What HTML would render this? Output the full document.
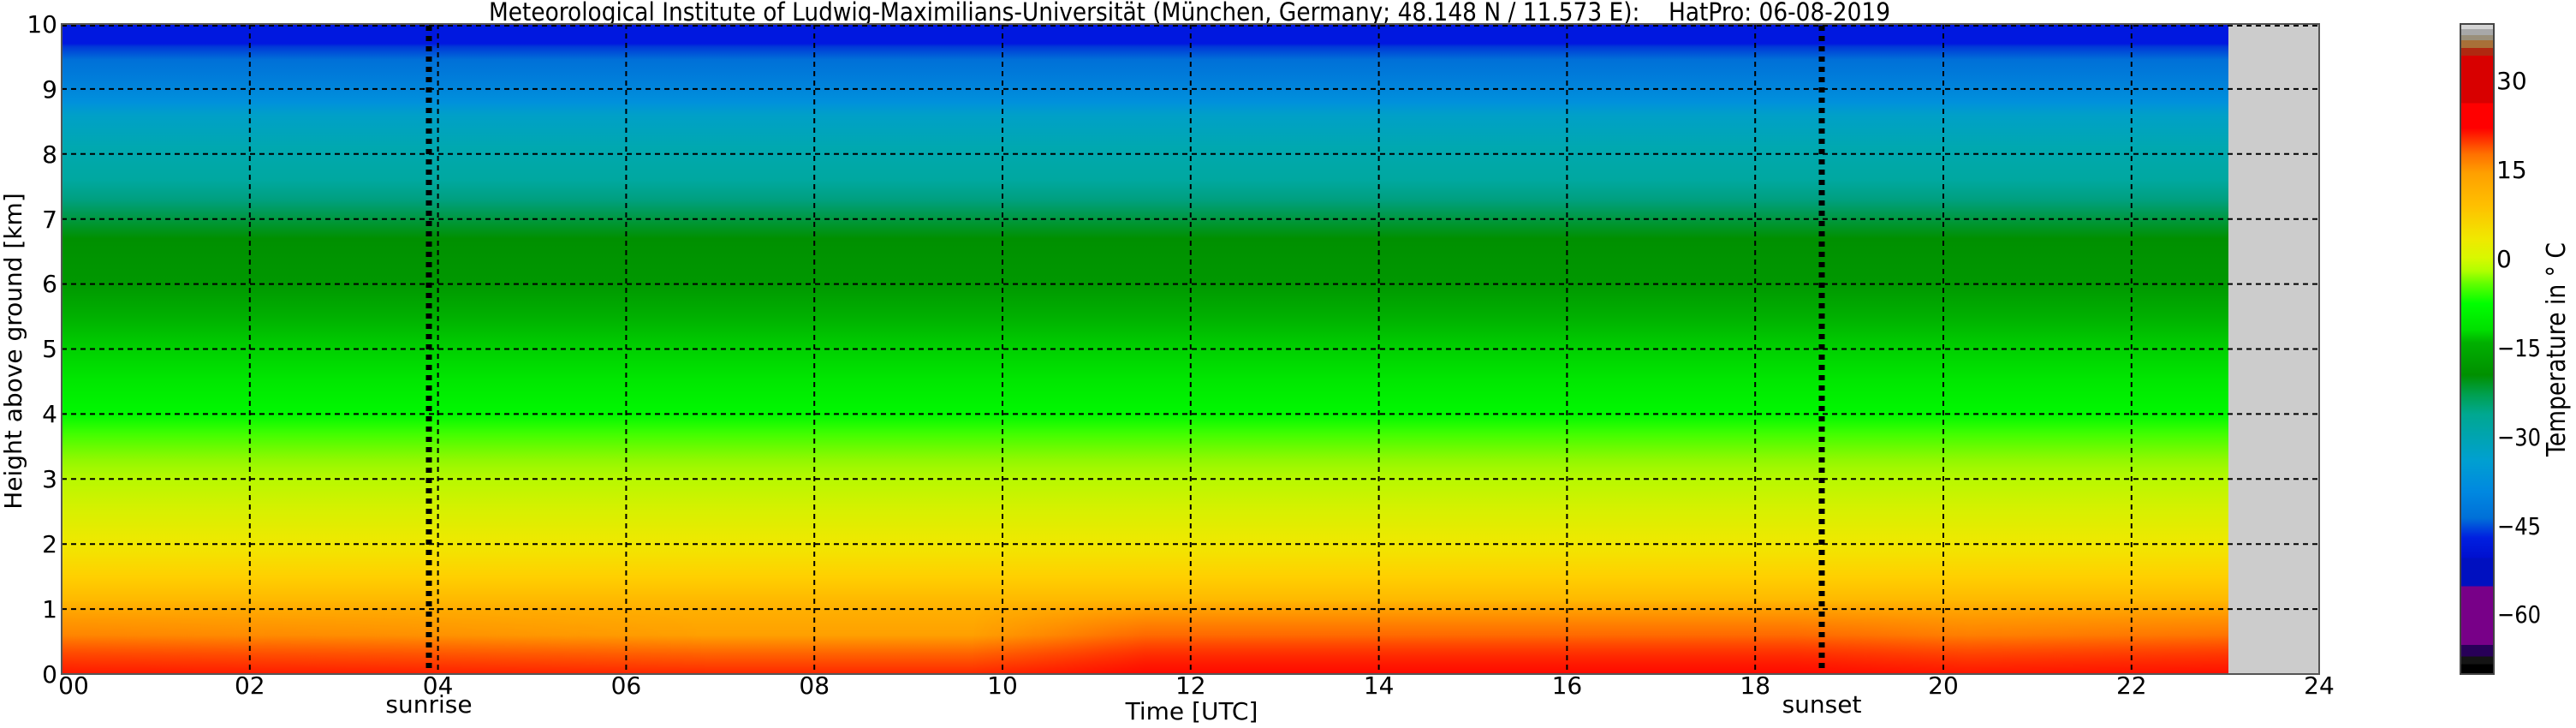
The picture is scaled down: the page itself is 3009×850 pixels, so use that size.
<!DOCTYPE html>
<html><head><meta charset="utf-8"><style>html,body{margin:0;padding:0;background:#fff}svg{display:block}</style></head>
<body>
<svg width="3009" height="850" xmlns="http://www.w3.org/2000/svg" font-family="DejaVu Sans, Liberation Sans, sans-serif">
<defs>
<linearGradient id="plot" x1="0" y1="0" x2="0" y2="1">
<stop offset="0" stop-color="#0018e0"/><stop offset="0.03" stop-color="#0018e0"/>
<stop offset="0.035" stop-color="#0038d8"/><stop offset="0.055" stop-color="#0070d8"/>
<stop offset="0.09" stop-color="#0080da"/><stop offset="0.12" stop-color="#0090dc"/>
<stop offset="0.14" stop-color="#00a0c8"/><stop offset="0.19" stop-color="#00a8b0"/>
<stop offset="0.24" stop-color="#00a8a0"/><stop offset="0.27" stop-color="#00a080"/>
<stop offset="0.30" stop-color="#009840"/><stop offset="0.33" stop-color="#009000"/>
<stop offset="0.40" stop-color="#009800"/><stop offset="0.45" stop-color="#00b000"/>
<stop offset="0.50" stop-color="#00d000"/><stop offset="0.55" stop-color="#00e800"/>
<stop offset="0.60" stop-color="#00f800"/><stop offset="0.63" stop-color="#40ff00"/>
<stop offset="0.67" stop-color="#90f800"/><stop offset="0.70" stop-color="#b8f800"/>
<stop offset="0.75" stop-color="#d8f000"/><stop offset="0.80" stop-color="#f0e800"/>
<stop offset="0.85" stop-color="#ffd000"/><stop offset="0.90" stop-color="#ffb000"/>
<stop offset="0.94" stop-color="#ffa000"/><stop offset="0.97" stop-color="#ff6000"/>
<stop offset="1" stop-color="#ff2800"/>
</linearGradient>
<linearGradient id="redv" x1="0" y1="0" x2="0" y2="1">
<stop offset="0" stop-color="#ff1000" stop-opacity="0"/><stop offset="1" stop-color="#ff0000" stop-opacity="1"/>
</linearGradient>
<linearGradient id="redh" x1="0" y1="0" x2="1" y2="0">
<stop offset="0" stop-color="#fff" stop-opacity="0.5"/><stop offset="0.15" stop-color="#fff" stop-opacity="0.3"/>
<stop offset="0.3" stop-color="#fff" stop-opacity="0"/><stop offset="0.42" stop-color="#fff" stop-opacity="0"/>
<stop offset="0.5" stop-color="#fff" stop-opacity="1"/><stop offset="0.8" stop-color="#fff" stop-opacity="1"/>
<stop offset="0.88" stop-color="#fff" stop-opacity="0.6"/><stop offset="1" stop-color="#fff" stop-opacity="0.8"/>
</linearGradient>
<mask id="rm"><rect x="72" y="700" width="2531" height="87" fill="url(#redh)"/></mask>
<linearGradient id="cb" gradientUnits="userSpaceOnUse" x1="0" y1="28" x2="0" y2="787">
<stop offset="0" stop-color="#d4d4d4"/><stop offset="0.008" stop-color="#d4d4d4"/>
<stop offset="0.008" stop-color="#a8a8a8"/><stop offset="0.017" stop-color="#a8a8a8"/>
<stop offset="0.017" stop-color="#9a8f7a"/><stop offset="0.025" stop-color="#9a8f7a"/>
<stop offset="0.025" stop-color="#a87038"/><stop offset="0.037" stop-color="#a87038"/>
<stop offset="0.037" stop-color="#b02810"/><stop offset="0.049" stop-color="#b02810"/>
<stop offset="0.049" stop-color="#d80000"/><stop offset="0.122" stop-color="#d80000"/>
<stop offset="0.122" stop-color="#ff0000"/><stop offset="0.16" stop-color="#ff0000"/>
<stop offset="0.20" stop-color="#ff7000"/><stop offset="0.23" stop-color="#ffa000"/>
<stop offset="0.28" stop-color="#ffc000"/><stop offset="0.33" stop-color="#f0e800"/>
<stop offset="0.36" stop-color="#d8f800"/><stop offset="0.38" stop-color="#b0ff00"/>
<stop offset="0.40" stop-color="#60ff00"/><stop offset="0.43" stop-color="#00ff00"/>
<stop offset="0.47" stop-color="#00e000"/><stop offset="0.49" stop-color="#00b000"/>
<stop offset="0.54" stop-color="#009000"/><stop offset="0.57" stop-color="#00a050"/>
<stop offset="0.60" stop-color="#00a890"/><stop offset="0.67" stop-color="#00a0d0"/>
<stop offset="0.72" stop-color="#0088e0"/><stop offset="0.76" stop-color="#0070d8"/>
<stop offset="0.79" stop-color="#0020e0"/><stop offset="0.82" stop-color="#0010d0"/>
<stop offset="0.823" stop-color="#0010c0"/><stop offset="0.865" stop-color="#0010c0"/>
<stop offset="0.865" stop-color="#780088"/><stop offset="0.955" stop-color="#780088"/>
<stop offset="0.955" stop-color="#280058"/><stop offset="0.973" stop-color="#280058"/>
<stop offset="0.973" stop-color="#141414"/><stop offset="0.985" stop-color="#141414"/>
<stop offset="0.985" stop-color="#000"/><stop offset="1" stop-color="#000"/>
</linearGradient>
</defs>

<text x="571" y="24" font-size="29" xml:space="preserve" textLength="1637" lengthAdjust="spacingAndGlyphs">Meteorological Institute of Ludwig-Maximilians-Universität (München, Germany; 48.148 N / 11.573 E):&#160;&#160;&#160;&#160;HatPro: 06-08-2019</text>

<rect x="72" y="28" width="2531" height="759" fill="url(#plot)"/>
<rect x="72" y="700" width="2531" height="87" fill="url(#redv)" mask="url(#rm)" opacity="0.75"/>
<rect x="2603" y="28" width="106" height="759" fill="#cccccc"/>

<g stroke="#000" stroke-width="2" stroke-dasharray="6,5" fill="none">
<path d="M72 103.9H2709M72 179.8H2709M72 255.7H2709M72 331.6H2709M72 407.5H2709M72 483.4H2709M72 559.3H2709M72 635.2H2709M72 711.1H2709M72 30H2709"/>
<path d="M291.8 28V787M511.6 28V787M731.4 28V787M951.2 28V787M1171 28V787M1390.8 28V787M1610.6 28V787M1830.4 28V787M2050.2 28V787M2270 28V787M2489.8 28V787"/>
</g>
<g stroke="#000" stroke-width="7" stroke-dasharray="6,6">
<path d="M501 30V787M2128 30V787"/>
</g>
<rect x="72" y="28" width="2637" height="759" fill="none" stroke="#555" stroke-width="2"/>

<g font-size="28" text-anchor="end">
<text x="67" y="38">10</text><text x="67" y="114">9</text><text x="67" y="190">8</text>
<text x="67" y="266">7</text><text x="67" y="341">6</text><text x="67" y="417">5</text>
<text x="67" y="493">4</text><text x="67" y="569">3</text><text x="67" y="645">2</text>
<text x="67" y="721">1</text><text x="67" y="797">0</text>
</g>
<text transform="translate(25,410) rotate(-90)" font-size="28" text-anchor="middle">Height above ground [km]</text>

<g font-size="28" text-anchor="middle">
<text x="86" y="810">00</text><text x="291.8" y="810">02</text><text x="511.6" y="810">04</text>
<text x="731.4" y="810">06</text><text x="951.2" y="810">08</text><text x="1171" y="810">10</text>
<text x="1390.8" y="810">12</text><text x="1610.6" y="810">14</text><text x="1830.4" y="810">16</text>
<text x="2050.2" y="810">18</text><text x="2270" y="810">20</text><text x="2489.8" y="810">22</text>
<text x="2709" y="810">24</text>
<text x="501" y="832">sunrise</text>
<text x="2128" y="832">sunset</text>
<text x="1392" y="840">Time [UTC]</text>
</g>

<rect x="2874" y="28" width="39" height="759" fill="url(#cb)" stroke="#444" stroke-width="2"/>
<g font-size="28">
<text x="2916" y="104">30</text><text x="2916" y="208">15</text><text x="2916" y="312">0</text>
<text x="2917" y="416" textLength="51" lengthAdjust="spacingAndGlyphs">−15</text>
<text x="2917" y="520" textLength="51" lengthAdjust="spacingAndGlyphs">−30</text>
<text x="2917" y="624" textLength="51" lengthAdjust="spacingAndGlyphs">−45</text>
<text x="2917" y="727" textLength="51" lengthAdjust="spacingAndGlyphs">−60</text>
</g>
<text transform="translate(2996,408) rotate(-90)" font-size="30" text-anchor="middle" textLength="250" lengthAdjust="spacingAndGlyphs">Temperature in ° C</text>
</svg>
</body></html>
